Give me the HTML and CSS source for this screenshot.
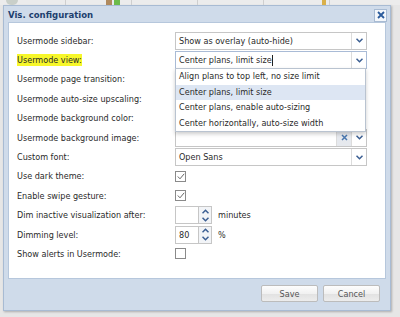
FILE: index.html
```html
<!DOCTYPE html>
<html lang="en">
<head>
    <meta charset="UTF-8">
    <title>Vis. configuration</title>
    <link rel="stylesheet" href="styles.css">
</head>
<body>
    <div class="backdrop">
        <span class="bg-cell"><i class="bg-icon round"></i></span>
        <span class="bg-cell"><i class="bg-icon brown"></i><i class="bg-icon green"></i></span>
        <span class="bg-cell"></span>
        <span class="bg-cell"></span>
        <span class="bg-cell"><i class="bg-icon pencil"></i></span>
    </div>

    <div class="dialog">
        <div class="dialog-title">
            <span>Vis. configuration</span>
            <button class="close-btn" title="Close">
                <svg width="8" height="8" viewBox="0 0 8 8"><path d="M1 1L7 7M7 1L1 7" stroke="#2b5b9c" stroke-width="1.8"/></svg>
            </button>
        </div>

        <div class="dialog-body">
            <div class="row">
                <label>Usermode sidebar:</label>
                <div class="select">
                    <span class="select-text">Show as overlay (auto-hide)</span>
                    <span class="select-arrow"><svg width="7" height="5" viewBox="0 0 7 5"><path d="M0.5 0.8L3.5 3.8L6.5 0.8" fill="none" stroke="#3b5f93" stroke-width="1.5"/></svg></span>
                </div>
            </div>
            <div class="row">
                <label><mark>Usermode view:</mark></label>
                <div class="select focus">
                    <span class="select-text">Center plans, limit size<i class="caret"></i></span>
                    <span class="select-arrow"><svg width="7" height="5" viewBox="0 0 7 5"><path d="M0.5 0.8L3.5 3.8L6.5 0.8" fill="none" stroke="#3b5f93" stroke-width="1.5"/></svg></span>
                    <ul class="menu">
                        <li>Align plans to top left, no size limit</li>
                        <li class="active">Center plans, limit size</li>
                        <li>Center plans, enable auto-sizing</li>
                        <li>Center horizontally, auto-size width</li>
                    </ul>
                </div>
            </div>
            <div class="row"><label>Usermode page transition:</label></div>
            <div class="row"><label>Usermode auto-size upscaling:</label></div>
            <div class="row"><label>Usermode background color:</label></div>
            <div class="row">
                <label>Usermode background image:</label>
                <div class="select">
                    <span class="select-text"></span>
                    <span class="select-clear">
                        <svg width="7" height="7" viewBox="0 0 7 7"><path d="M1 1L6 6M6 1L1 6" stroke="#4a78b0" stroke-width="1.5"/></svg>
                    </span>
                    <span class="select-arrow"><svg width="7" height="5" viewBox="0 0 7 5"><path d="M0.5 0.8L3.5 3.8L6.5 0.8" fill="none" stroke="#3b5f93" stroke-width="1.5"/></svg></span>
                </div>
            </div>
            <div class="row">
                <label>Custom font:</label>
                <div class="select">
                    <span class="select-text">Open Sans</span>
                    <span class="select-arrow"><svg width="7" height="5" viewBox="0 0 7 5"><path d="M0.5 0.8L3.5 3.8L6.5 0.8" fill="none" stroke="#3b5f93" stroke-width="1.5"/></svg></span>
                </div>
            </div>
            <div class="row">
                <label>Use dark theme:</label>
                <span class="check"><svg width="8" height="7" viewBox="0 0 8 7"><path d="M0.8 3.5L3 5.8L7.2 0.8" fill="none" stroke="#666" stroke-width="1"/></svg></span>
            </div>
            <div class="row">
                <label>Enable swipe gesture:</label>
                <span class="check"><svg width="8" height="7" viewBox="0 0 8 7"><path d="M0.8 3.5L3 5.8L7.2 0.8" fill="none" stroke="#666" stroke-width="1"/></svg></span>
            </div>
            <div class="row">
                <label>Dim inactive visualization after:</label>
                <div class="spinner">
                    <span class="spin-input"></span>
                    <span class="spin-btns">
                        <svg width="7" height="5" viewBox="0 0 7 5"><path d="M0.5 4.2L3.5 1.2L6.5 4.2" fill="none" stroke="#3b5f93" stroke-width="1.5"/></svg>
                        <svg width="7" height="5" viewBox="0 0 7 5"><path d="M0.5 0.8L3.5 3.8L6.5 0.8" fill="none" stroke="#3b5f93" stroke-width="1.5"/></svg>
                    </span>
                </div>
                <span class="unit">minutes</span>
            </div>
            <div class="row">
                <label>Dimming level:</label>
                <div class="spinner">
                    <span class="spin-input">80</span>
                    <span class="spin-btns">
                        <svg width="7" height="5" viewBox="0 0 7 5"><path d="M0.5 4.2L3.5 1.2L6.5 4.2" fill="none" stroke="#3b5f93" stroke-width="1.5"/></svg>
                        <svg width="7" height="5" viewBox="0 0 7 5"><path d="M0.5 0.8L3.5 3.8L6.5 0.8" fill="none" stroke="#3b5f93" stroke-width="1.5"/></svg>
                    </span>
                </div>
                <span class="unit">%</span>
            </div>
            <div class="row">
                <label>Show alerts in Usermode:</label>
                <span class="check"></span>
            </div>
        </div>

        <div class="dialog-footer">
            <button class="btn">Save</button>
            <button class="btn">Cancel</button>
        </div>
    </div>
</body>
</html>
```
FILE: styles.css
```css
*
{
    box-sizing: border-box;
}
body
{
    margin: 0;
    background: #e6e6e6;
    font-family: "DejaVu Sans Condensed", "DejaVu Sans", sans-serif;
    font-size: 9px;
    color: #2a2a2a;
    width: 400px;
    height: 317px;
    overflow: hidden;
}
.backdrop
{
    display: flex;
    height: 5px;
    overflow: hidden;
    background: #ececec;
}
.bg-cell
{
    width: 66px;
    border-right: 1px solid #cfcfcf;
    display: flex;
    gap: 2px;
}
.bg-cell:first-child
{
    padding-left: 6px;
}
.bg-cell:nth-child(2)
{
    padding-left: 40px;
}
.bg-cell:last-child
{
    padding-left: 58px;
}
.bg-icon
{
    width: 6px;
    height: 5px;
}
.round { background: #c9cfc9; width: 12px; border-radius: 0 0 6px 6px; }
.brown { background: #b08a5e; }
.green { background: #6dbb4a; }
.pencil { background: #d9b04a; width: 4px; }

.dialog
{
    margin-left: 3px;
    width: 388px;
    height: 306px;
    background: #cfdbea;
    border: 1px solid #a8bbd3;
    box-shadow: 1px 1px 2px rgba(0, 0, 0, 0.25);
    padding: 0 4px 3px 4px;
    display: flex;
    flex-direction: column;
}
.dialog-title
{
    height: 16px;
    display: flex;
    align-items: center;
    justify-content: space-between;
    font-weight: bold;
    color: #1d3f6e;
    font-size: 9.5px;
}
.close-btn
{
    width: 13px;
    height: 13px;
    margin-top: 2px;
    margin-right: -1px;
    padding: 0;
    border: 1px solid #a8bbd3;
    background: #f4f7fb;
    display: flex;
    align-items: center;
    justify-content: center;
}
.dialog-body
{
    background: #fff;
    border: 1px solid #b6c7dc;
    height: 257px;
    padding: 8px 0 0 8px;
}
.row
{
    height: 19.4px;
    display: flex;
    align-items: center;
}
.row label
{
    width: 158px;
    flex-shrink: 0;
}
mark
{
    background: #f7f72a;
    color: #2a2a2a;
    padding: 1px 0;
}
.select
{
    position: relative;
    width: 192px;
    height: 18px;
    border: 1px solid #c6c6c6;
    display: flex;
    background: #fff;
}
.select.focus
{
    border-color: #a9bbd6;
}
.select-text
{
    flex: 1;
    padding-left: 3px;
    display: flex;
    align-items: center;
}
.caret
{
    width: 1px;
    height: 11px;
    background: #222;
}
.select-arrow, .select-clear
{
    width: 15px;
    border-left: 1px solid #dcdcdc;
    display: flex;
    align-items: center;
    justify-content: center;
}
.select-clear
{
    background: #e6e9ee;
}
.menu
{
    position: absolute;
    left: -1px;
    top: 16px;
    width: 191px;
    margin: 0;
    padding: 0;
    list-style: none;
    background: #fff;
    border: 1px solid #b9c3d0;
    box-shadow: 0 2px 4px rgba(0, 0, 0, 0.2);
    z-index: 2;
}
.menu li
{
    height: 15.5px;
    line-height: 15.5px;
    padding-left: 3px;
}
.menu li.active
{
    background: #dde6f3;
}
.check
{
    width: 11px;
    height: 11px;
    border: 1px solid #8a8a8a;
    display: flex;
    align-items: center;
    justify-content: center;
}
.spinner
{
    display: flex;
    height: 18px;
}
.spin-input
{
    width: 24px;
    border: 1px solid #c6c6c6;
    padding-left: 3px;
    display: flex;
    align-items: center;
}
.spin-btns
{
    width: 13px;
    border: 1px solid #c6c6c6;
    border-left: none;
    background: #f2f4f7;
    display: flex;
    flex-direction: column;
    align-items: center;
    justify-content: space-around;
}
.unit
{
    margin-left: 6px;
}
.dialog-footer
{
    flex: 1;
    display: flex;
    justify-content: flex-end;
    align-items: flex-start;
    gap: 5px;
    padding: 6px 6px 0 0;
}
.btn
{
    width: 57px;
    height: 17px;
    border: 1px solid #bcbcbc;
    border-radius: 2px;
    background: linear-gradient(#fdfdfd, #f0f0f0 55%, #e2e2e2 56%, #ececec);
    color: #555;
    font-family: inherit;
    font-size: 9px;
    padding: 0;
}
```
